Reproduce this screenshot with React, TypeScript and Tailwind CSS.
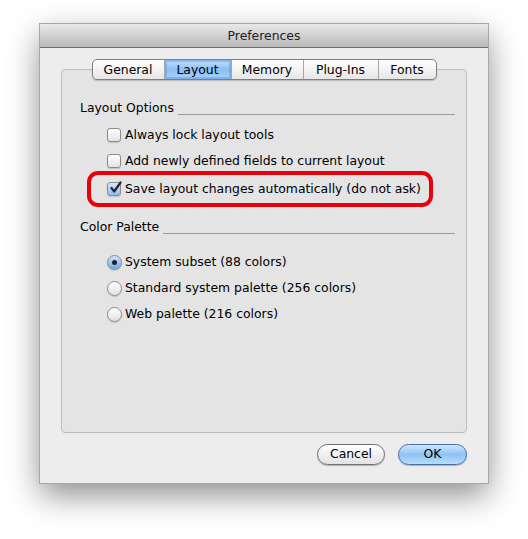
import React from "react";

const tabs = ["General", "Layout", "Memory", "Plug-Ins", "Fonts"];
const tabWidths = ["w-[71px]", "w-[67px]", "w-[72px]", "w-[75px]", "w-[58px]"];

function Checkbox({ checked }: { checked?: boolean }) {
  return (
    <span
      className={
        "relative inline-flex h-[14px] w-[14px] shrink-0 items-center justify-center rounded-[3px] border border-[#8c8c8c] shadow-[0_1px_1px_rgba(0,0,0,0.15)] " +
        (checked
          ? "bg-gradient-to-b from-[#d6e8fa] to-[#8fbbe8]"
          : "bg-gradient-to-b from-[#ffffff] to-[#e3e3e3]")
      }
    >
      {checked && (
        <svg width="13" height="13" viewBox="0 0 13 13" className="absolute -top-[2px] left-[1px]">
          <path d="M2.5 7 L5.2 10.5 L11.5 1.5" fill="none" stroke="#1e2a3a" strokeWidth="2.2" strokeLinecap="round" strokeLinejoin="round" />
        </svg>
      )}
    </span>
  );
}

function Radio({ checked }: { checked?: boolean }) {
  return (
    <span
      className={
        "inline-flex h-[15px] w-[15px] shrink-0 items-center justify-center rounded-full border border-[#8c8c8c] shadow-[0_1px_1px_rgba(0,0,0,0.15)] " +
        (checked
          ? "bg-gradient-to-b from-[#cfe4fb] to-[#6fa7e6]"
          : "bg-gradient-to-b from-[#ffffff] to-[#e1e1e1]")
      }
    >
      {checked && <span className="h-[5px] w-[5px] rounded-full bg-[#1c2430]" />}
    </span>
  );
}

function GroupLabel({ text }: { text: string }) {
  return (
    <div className="flex h-[16px] items-center gap-[4px]">
      <span className="whitespace-nowrap text-[12.4px] leading-[16px] text-black">{text}</span>
      <div className="mt-[12px] h-px flex-1 bg-[#9a9a9a]" />
    </div>
  );
}

function Label({ text }: { text: string }) {
  return <span className="whitespace-nowrap text-[12.4px] leading-[16px] text-black">{text}</span>;
}

export default function App() {
  return (
    <div
      className="h-[539px] w-[528px] bg-white pl-[40px] pt-[24px]"
      style={{ fontFamily: '"DejaVu Sans", "Liberation Sans", sans-serif' }}
    >
      <div className="flex h-[459px] w-[448px] flex-col bg-[#ededed] shadow-[0_12px_30px_rgba(0,0,0,0.45)] outline outline-1 outline-[#a8a8a8]">
        {/* title bar */}
        <div className="flex h-[24px] shrink-0 items-center justify-center rounded-t-[4px] border-b border-[#6f6f6f] bg-gradient-to-b from-[#e9e9e9] to-[#b9b9b9] pt-[1px] text-[12.4px] text-[#222]">
          Preferences
        </div>

        <div className="flex flex-1 flex-col px-[21px] pt-[11px]">
          {/* tab strip */}
          <div className="relative z-10 -mb-[11px] flex w-[406px] justify-center">
            <div className="flex h-[21px] overflow-hidden rounded-[5px] border border-[#7e7e7e] bg-gradient-to-b from-[#ffffff] to-[#e6e6e6] shadow-[0_1px_1px_rgba(0,0,0,0.2)]">
              {tabs.map((t, i) => (
                <div
                  key={t}
                  className={
                    "flex items-center justify-center text-[12.4px] leading-[16px] text-black " +
                    tabWidths[i] +
                    (i > 0 ? " border-l border-[#a5a5a5]" : "") +
                    (t === "Layout"
                      ? " bg-gradient-to-b from-[#c6e0fb] via-[#8cbff2] to-[#a9d2fb] shadow-[inset_0_0_0_2px_rgba(100,160,230,0.6)]"
                      : "")
                  }
                >
                  {t}
                </div>
              ))}
            </div>
          </div>

          {/* tab box */}
          <div className="flex h-[364px] w-[406px] flex-col rounded-[4px] border border-[#bdbdbd] bg-[#e4e4e4] pl-[18px] pr-[11px] pt-[30px]">
            <GroupLabel text="Layout Options" />

            <div className="mt-[11px] flex flex-col pl-[27px]">
              <div className="flex h-[16px] items-center gap-[4px]">
                <Checkbox />
                <Label text="Always lock layout tools" />
              </div>
              <div className="mt-[10px] flex h-[16px] items-center gap-[4px]">
                <Checkbox />
                <Label text="Add newly defined fields to current layout" />
              </div>
            </div>

            <div className="ml-[7px] mt-[2px] flex h-[36px] w-[346px] items-center gap-[4px] rounded-[11px] border-[4px] border-[#e8000b] pl-[16px]">
              <Checkbox checked />
              <Label text="Save layout changes automatically (do not ask)" />
            </div>

            <div className="mt-[12px]">
              <GroupLabel text="Color Palette" />
            </div>

            <div className="mt-[19px] flex flex-col gap-[10px] pl-[27px]">
              <div className="flex h-[16px] items-center gap-[3px]">
                <Radio checked />
                <Label text="System subset (88 colors)" />
              </div>
              <div className="flex h-[16px] items-center gap-[3px]">
                <Radio />
                <Label text="Standard system palette (256 colors)" />
              </div>
              <div className="flex h-[16px] items-center gap-[3px]">
                <Radio />
                <Label text="Web palette (216 colors)" />
              </div>
            </div>
          </div>

          {/* buttons */}
          <div className="mt-[11px] flex justify-end gap-[13px]">
            <button className="flex h-[21px] w-[68px] items-center justify-center rounded-full border border-[#6f6f6f] bg-gradient-to-b from-[#ffffff] to-[#e2e2e2] text-[12.4px] text-black shadow-[0_1px_1px_rgba(0,0,0,0.25)]">
              Cancel
            </button>
            <button className="flex h-[21px] w-[69px] items-center justify-center rounded-full border border-[#4a6fa5] bg-gradient-to-b from-[#cfe6fd] via-[#8ec3f5] to-[#b9ddfc] text-[12.4px] text-black shadow-[0_1px_1px_rgba(0,0,0,0.25)]">
              OK
            </button>
          </div>
        </div>
      </div>
    </div>
  );
}
